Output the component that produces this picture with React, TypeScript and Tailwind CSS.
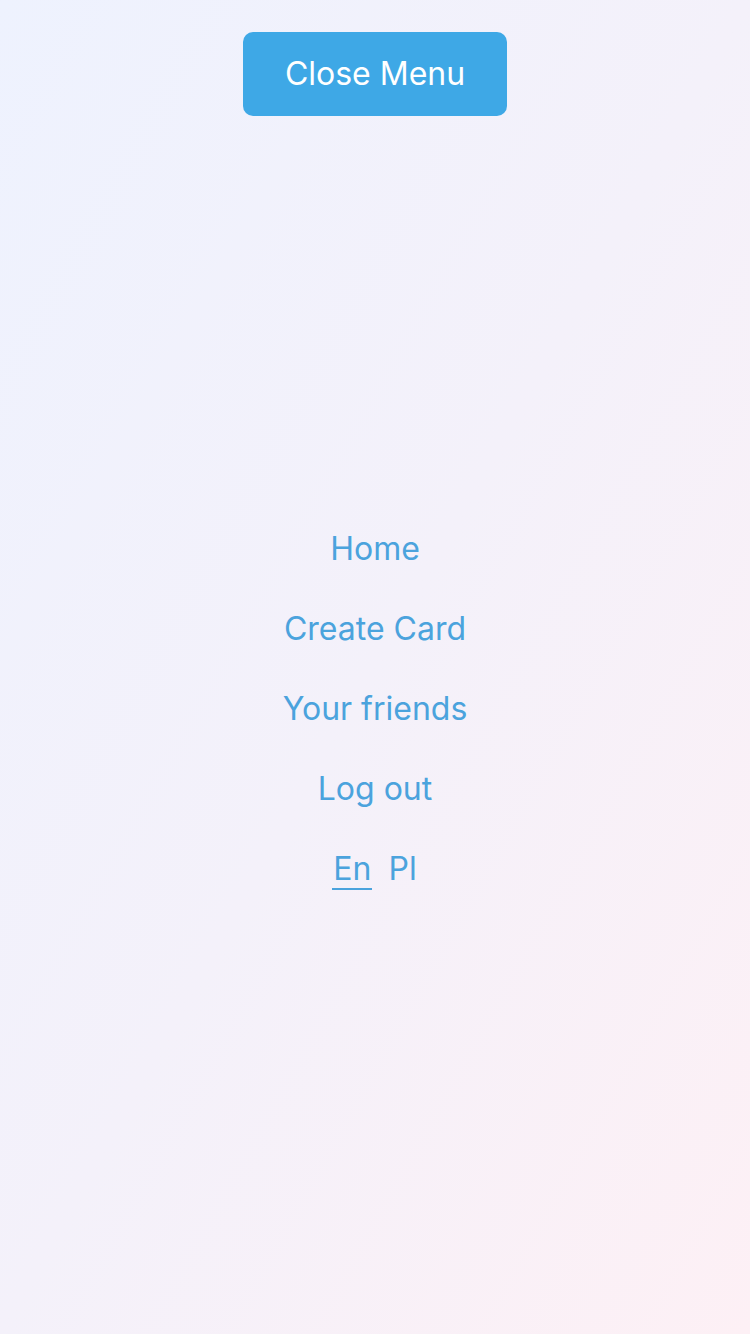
import React, { useState } from 'react';

const links = ['Home', 'Create Card', 'Your friends', 'Log out'];

const App: React.FC = () => {
  const [lang, setLang] = useState<'En' | 'Pl'>('En');

  return (
    <div
      className="min-h-[1334px] w-full bg-gradient-to-br from-[#eef2fe] via-[#f4f1fa] to-[#fdf0f5] flex flex-col items-center pt-8"
      style={{ fontFamily: 'Inter, "Noto Sans", sans-serif' }}
    >
      {/* Toggle */}
      <button className="w-[264px] h-[84px] rounded-[10px] bg-[#3ea8e6] text-white text-[32px] leading-none">
        Close Menu
      </button>

      {/* Nav */}
      <nav className="mt-[393px] flex flex-col items-center text-[#4ba3dd] text-[32px] leading-[80px]">
        {links.map((link) => (
          <a key={link} href="#" className="block">
            {link}
          </a>
        ))}
        <div className="flex items-start gap-[15px] h-[80px]">
          {(['En', 'Pl'] as const).map((l) => (
            <button
              key={l}
              onClick={() => setLang(l)}
              className={`h-[61px] px-[1px] leading-[80px] ${
                lang === l ? 'border-b-2 border-[#4ba3dd]' : 'border-b-2 border-transparent'
              }`}
            >
              <span className="block h-[59px]">{l}</span>
            </button>
          ))}
        </div>
      </nav>
    </div>
  );
};

export default App;
